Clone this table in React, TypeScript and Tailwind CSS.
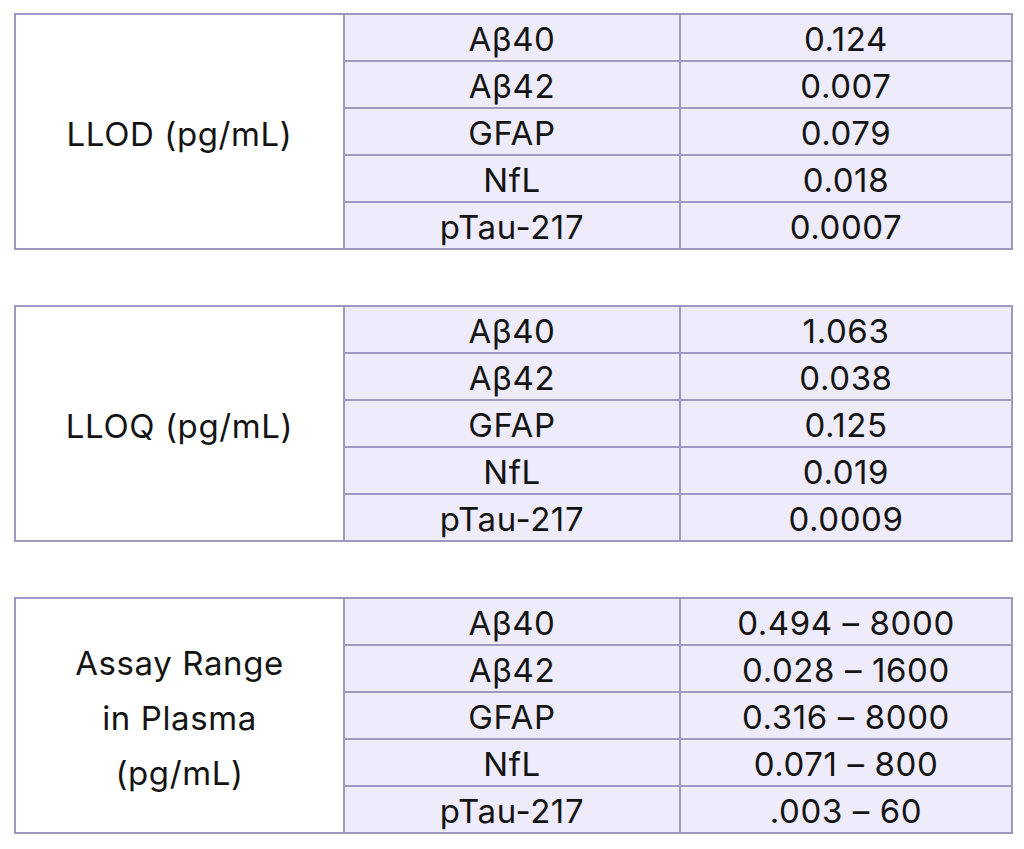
const tables = [
  {
    label: ['LLOD (pg/mL)'],
    rows: [
      ['Aβ40', '0.124'],
      ['Aβ42', '0.007'],
      ['GFAP', '0.079'],
      ['NfL', '0.018'],
      ['pTau-217', '0.0007'],
    ],
  },
  {
    label: ['LLOQ (pg/mL)'],
    rows: [
      ['Aβ40', '1.063'],
      ['Aβ42', '0.038'],
      ['GFAP', '0.125'],
      ['NfL', '0.019'],
      ['pTau-217', '0.0009'],
    ],
  },
  {
    label: ['Assay Range', 'in Plasma', '(pg/mL)'],
    rows: [
      ['Aβ40', '0.494 – 8000'],
      ['Aβ42', '0.028 – 1600'],
      ['GFAP', '0.316 – 8000'],
      ['NfL', '0.071 – 800'],
      ['pTau-217', '.003 – 60'],
    ],
  },
];

export default function App() {
  return (
    <div
      className="w-[1024px] h-[849px] bg-white pt-[13px] pl-[14px] flex flex-col gap-[55px] text-[#141414]"
      style={{ fontFamily: 'Inter, "Noto Sans", sans-serif' }}
    >
      {tables.map((t, i) => (
        <table key={i} className="table-fixed border-collapse w-[997px] text-[33px] tracking-[0.6px] leading-none">
          <colgroup>
            <col className="w-[329px]" />
            <col className="w-[336px]" />
            <col className="w-[332px]" />
          </colgroup>
          <tbody>
            {t.rows.map((r, j) => (
              <tr key={j} className="h-[47px]">
                {j === 0 && (
                  <td
                    rowSpan={5}
                    className="border-2 border-[#9d99bf] bg-white text-center align-middle leading-[55px] pt-[6px]"
                  >
                    {t.label.map((l) => (
                      <div key={l}>{l}</div>
                    ))}
                  </td>
                )}
                <td className="border-2 border-[#9d99bf] bg-[#eeebfa] text-center align-middle pt-[3px]">{r[0]}</td>
                <td className="border-2 border-[#9d99bf] bg-[#eeebfa] text-center align-middle pt-[3px]">{r[1]}</td>
              </tr>
            ))}
          </tbody>
        </table>
      ))}
    </div>
  );
}
